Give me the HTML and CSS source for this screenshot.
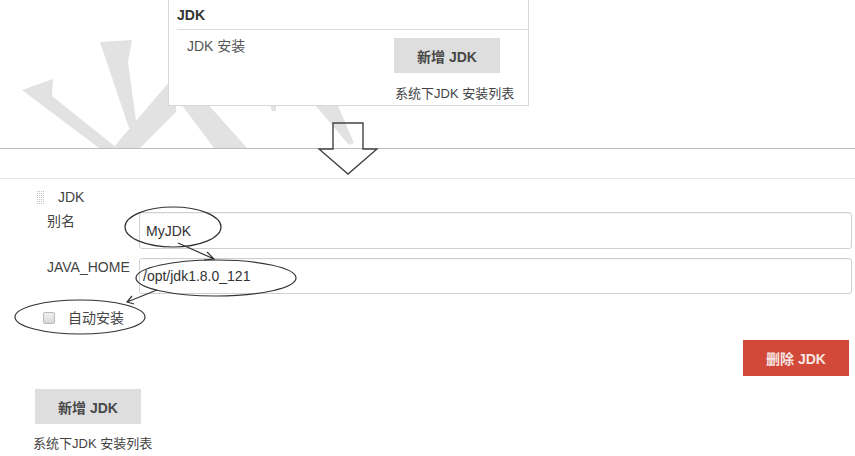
FILE: index.html
```html
<!DOCTYPE html>
<html lang="zh-CN">
<head>
<meta charset="utf-8">
<title>JDK 安装</title>
<link rel="stylesheet" href="styles.css">
</head>
<body>
  <section class="top">
    <svg class="watermark" width="855" height="148" viewBox="0 0 855 148" aria-hidden="true">
      <polygon points="22,90 53,79 52,96 117,148 99,148"/>
      <polygon points="100,42 132,40 128,62 137,128 129,128"/>
      <polygon points="176,74 176,112 140,148 113,148"/>
      <polygon points="172,92 197,92 247,148 214,148"/>
      <polygon points="270,105 276,105 276,111 272,111"/>
      <polygon points="316,106 338,106 354,143 349,145"/>
    </svg>
    <div class="panel">
      <div class="panel-head">JDK</div>
      <div class="panel-body">
        <div class="panel-label">JDK 安装</div>
        <div class="panel-col">
          <button class="btn btn-gray">新增 JDK</button>
          <div class="desc">系统下JDK 安装列表</div>
        </div>
      </div>
    </div>
  </section>
  <div class="gap"></div>
  <section class="form">
    <div class="handle-row">
      <span class="handle"></span>
      <span class="handle-title">JDK</span>
    </div>
    <div class="field-row">
      <div class="field-label">别名</div>
      <div class="field-input">MyJDK</div>
    </div>
    <div class="field-row field-row-2">
      <div class="field-label">JAVA_HOME</div>
      <div class="field-input field-input-path">/opt/jdk1.8.0_121</div>
    </div>
    <div class="check-row">
      <span class="checkbox"></span>
      <span class="check-label">自动安装</span>
    </div>
    <div class="delete-row">
      <button class="btn btn-red">删除 JDK</button>
    </div>
    <button class="btn btn-gray btn-add">新增 JDK</button>
    <div class="desc desc-bottom">系统下JDK 安装列表</div>
  </section>
  <svg class="annot" width="855" height="456" viewBox="0 0 855 456" aria-hidden="true">
    <polygon class="big-arrow" points="333,123 363,123 363,149 377,149 348,174 319,149 333,149"/>
    <ellipse cx="173" cy="227" rx="48" ry="20"/>
    <ellipse cx="216" cy="278" rx="80" ry="18"/>
    <ellipse cx="80" cy="317" rx="65" ry="17"/>
    <path d="M178 243 L214 259 M207 252 L214 259 L204 260"/>
    <path d="M157 290 L127 302 M132 296 L127 302 L134 304"/>
  </svg>
</body>
</html>
```

FILE: styles.css
```css
html, body {
  margin: 0;
  padding: 0;
}
body {
  width: 855px;
  height: 456px;
  position: relative;
  overflow: hidden;
  background: #fff;
  font-family: "Liberation Sans", "Noto Sans CJK SC", sans-serif;
  color: #333;
}
.top {
  position: relative;
  height: 148px;
  border-bottom: 1px solid #bdbdbd;
}
.watermark {
  position: absolute;
  left: 0;
  top: 0;
  z-index: 0;
}
.watermark polygon {
  fill: #e2e2e2;
}
.panel {
  position: relative;
  z-index: 1;
  margin-left: 168px;
  width: 361px;
  box-sizing: border-box;
  background: #fff;
  border: 1px solid #d8d8d8;
  border-top: 0;
  padding: 0 0 3px 8px;
}
.panel-head {
  box-sizing: border-box;
  height: 30px;
  padding-top: 7px;
  line-height: 16px;
  font-size: 14px;
  font-weight: bold;
  color: #333;
  border-bottom: 1px solid #dcdcdc;
}
.panel-body {
  display: flex;
  padding-top: 8px;
}
.panel-label {
  width: 217px;
  box-sizing: border-box;
  padding-left: 10px;
  font-size: 14px;
  line-height: 16px;
  color: #555;
}
.panel-col {
  display: flex;
  flex-direction: column;
  align-items: flex-start;
}
.btn {
  display: block;
  width: 106px;
  height: 35px;
  border: 0;
  margin: 0;
  padding: 0;
  font-family: "Liberation Sans", "Noto Sans CJK SC", sans-serif;
  font-size: 14px;
  font-weight: bold;
}
.btn-gray {
  background: #dedede;
  color: #484848;
}
.btn-red {
  height: 36px;
  background: #d24939;
  color: #f7e6e3;
}
.desc {
  margin-top: 13px;
  margin-left: 1px;
  font-size: 13px;
  line-height: 16px;
  color: #444;
}
.gap {
  height: 29px;
  border-bottom: 1px solid #e6e6e6;
}
.form {
  padding: 10px 3px 0 0;
}
.handle-row {
  display: flex;
  align-items: center;
  height: 16px;
  padding-left: 36px;
}
.handle {
  width: 9px;
  height: 14px;
  background:
    linear-gradient(90deg, #fff 1px, transparent 1px) 0 0 / 2px 2px,
    linear-gradient(#fff 1px, transparent 1px) 0 0 / 2px 2px,
    #c2c2c2;
}
.handle-title {
  margin-left: 13px;
  font-size: 14px;
  line-height: 16px;
  color: #444;
}
.field-row {
  display: flex;
  margin-top: 7px;
  padding-left: 47px;
}
.field-row-2 {
  margin-top: 9px;
}
.field-label {
  width: 92px;
  padding-top: 1px;
  font-size: 14px;
  line-height: 16px;
  color: #444;
}
.field-input {
  flex: 1;
  box-sizing: border-box;
  height: 37px;
  display: flex;
  align-items: center;
  padding-left: 6px;
  border: 1px solid #d0d0d0;
  border-radius: 3px;
  box-shadow: inset 0 1px 1px rgba(0, 0, 0, 0.04);
  font-size: 14px;
  color: #333;
}
.field-row-2 .field-input {
  height: 36px;
}
.field-input-path {
  padding-left: 3px;
}
.check-row {
  display: flex;
  align-items: center;
  height: 16px;
  margin-top: 16px;
  padding-left: 43px;
}
.checkbox {
  width: 12px;
  height: 12px;
  box-sizing: border-box;
  border: 1px solid #b8b8b8;
  border-radius: 2px;
  background: linear-gradient(#f0f0f0, #d8d8d8);
}
.check-label {
  margin-left: 13px;
  font-size: 14px;
  line-height: 16px;
  color: #444;
}
.delete-row {
  display: flex;
  justify-content: flex-end;
  margin-top: 14px;
  padding-right: 3px;
}
.btn-add {
  margin-top: 13px;
  margin-left: 35px;
}
.desc-bottom {
  margin-top: 12px;
  margin-left: 33px;
}
.annot {
  position: absolute;
  left: 0;
  top: 0;
  z-index: 2;
  pointer-events: none;
}
.annot ellipse,
.annot path,
.annot polygon {
  fill: none;
  stroke: #333;
  stroke-width: 1.2;
}
.annot .big-arrow {
  stroke: #444;
  stroke-width: 1.4;
}
```
